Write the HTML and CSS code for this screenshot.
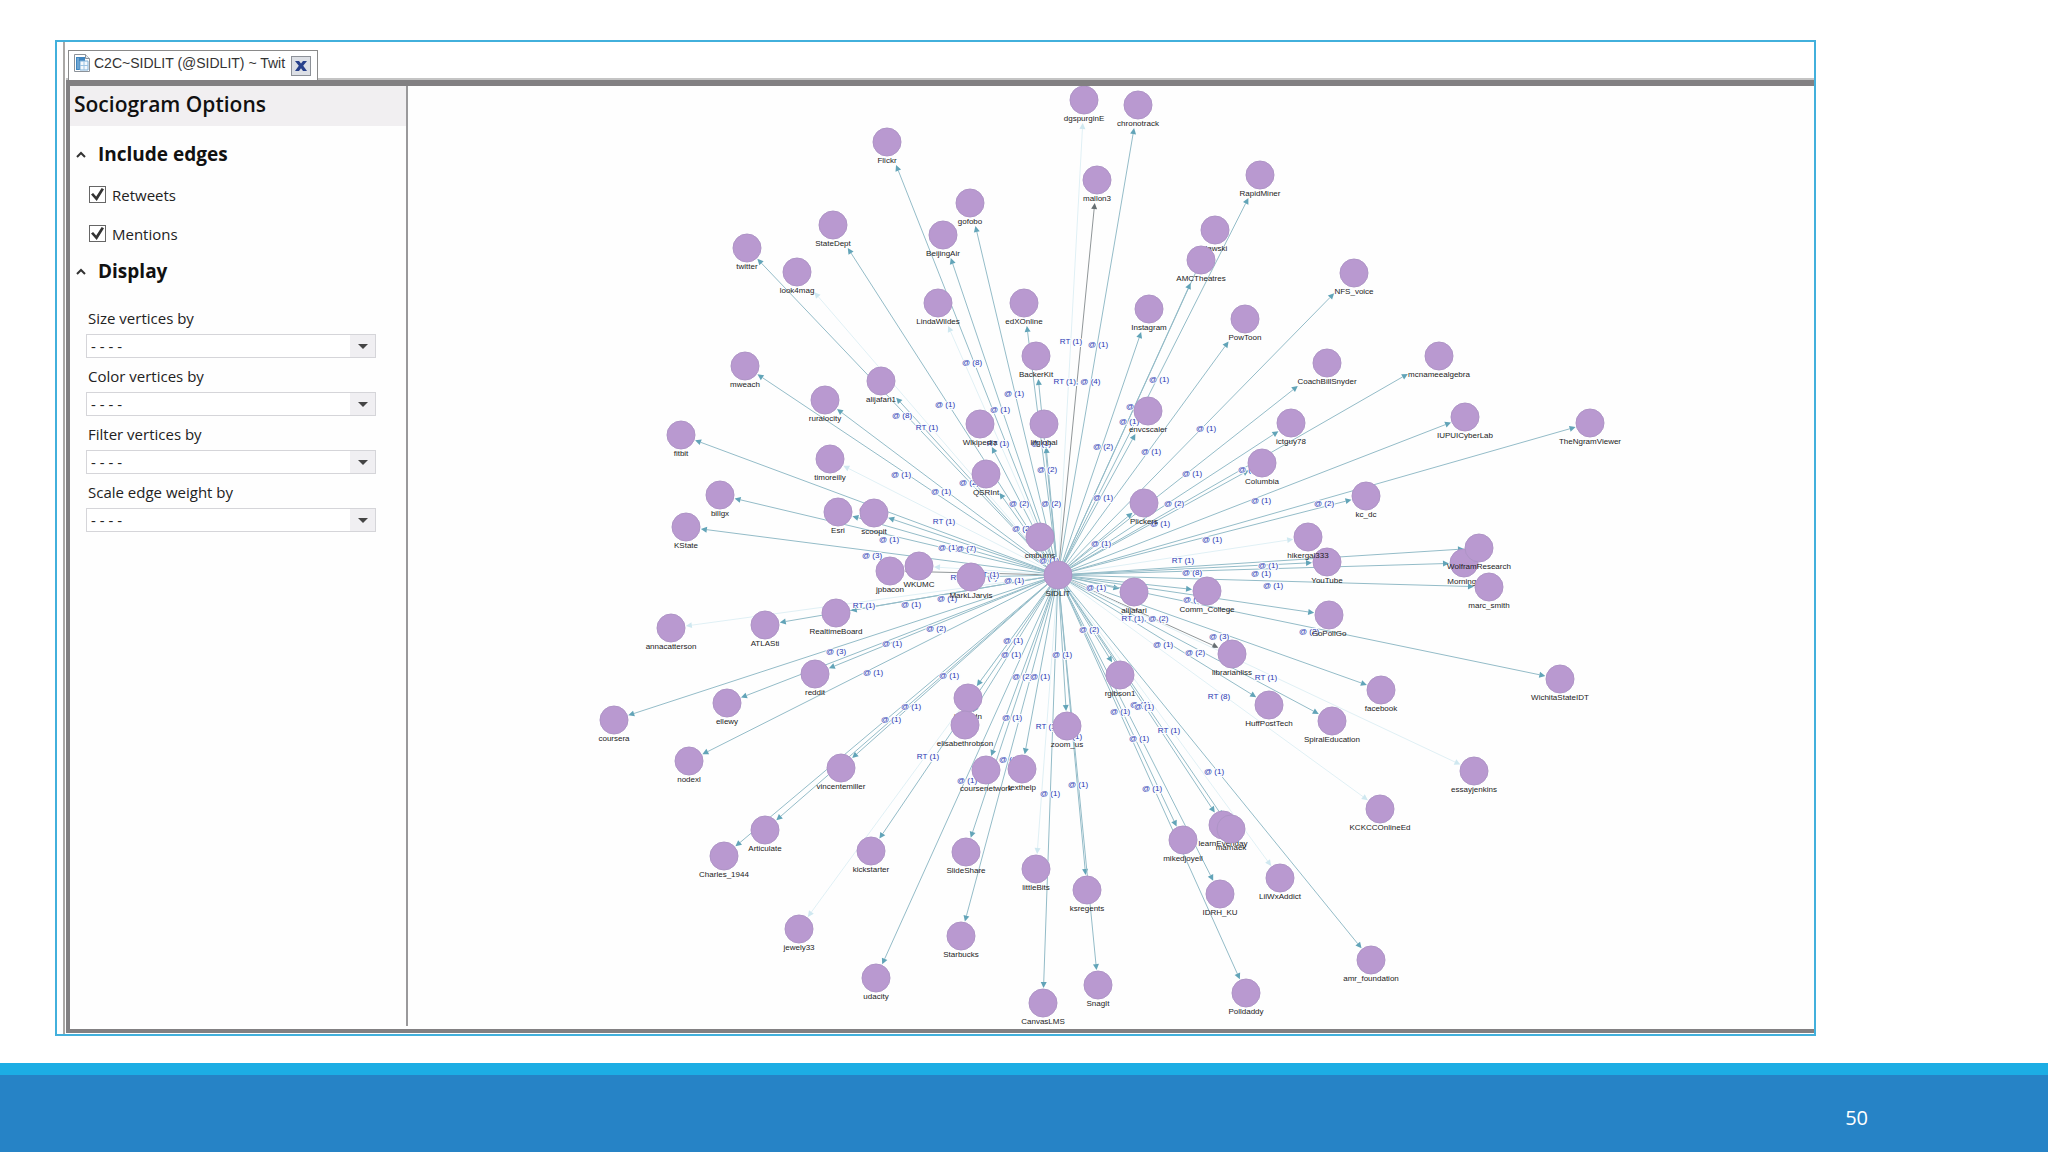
FILE: index.html
```html
<!DOCTYPE html>
<html lang="en">

<head>
    <meta charset="UTF-8">
    <title>C2C~SIDLIT (@SIDLIT) ~ Twitter Sociogram</title>
    <link rel="stylesheet" href="styles.css">
</head>

<body>
    <main class="frame">
        <div class="window">
            <div class="tab-strip">
                <div class="tab">
                    <svg class="tab-icon" width="18" height="20" viewBox="0 0 18 20">
                        <path d="M1.5 1.5h11l4 4v13h-15z" fill="#fff" stroke="#8c9299" />
                        <path d="M12.5 1.5v4h4" fill="#e3e8ee" stroke="#8c9299" />
                        <path d="M3 4h9v4H7v9H3z" fill="#3f86c0" />
                        <path d="M7 8h8v9H7z" fill="#f4f9fd" stroke="#7fb0d8" />
                        <path d="M11 8v9M7 12.5h8M5 5v11" stroke="#9cc4e4" />
                    </svg>
                    <span class="tab-title">C2C~SIDLIT (@SIDLIT) ~ Twit</span>
                    <button class="tab-close" aria-label="Close tab">
                        <svg width="12" height="10" viewBox="0 0 12 10">
                            <path d="M0 0h4l2 2.5L8 0h4L8.2 4.8 12 10H8L6 7.2 4 10H0l3.8-5.2z" fill="#27408b" />
                        </svg>
                    </button>
                </div>
            </div>

            <div class="workspace">
                <aside class="options">
                    <h1 class="options-title">Sociogram Options</h1>

                    <h2 class="section-title">
                        <button class="section-toggle" aria-expanded="true">
                            <svg width="10" height="7" viewBox="0 0 10 7">
                                <path d="M1 6l4-4 4 4" fill="none" stroke="#333" stroke-width="2" />
                            </svg>
                            Include edges
                        </button>
                    </h2>
                    <label class="check-row"><input type="checkbox" checked> Retweets</label>
                    <label class="check-row"><input type="checkbox" checked> Mentions</label>

                    <h2 class="section-title section-display">
                        <button class="section-toggle" aria-expanded="true">
                            <svg width="10" height="7" viewBox="0 0 10 7">
                                <path d="M1 6l4-4 4 4" fill="none" stroke="#333" stroke-width="2" />
                            </svg>
                            Display
                        </button>
                    </h2>
                    <div class="field">
                        <label for="size-by">Size vertices by</label>
                        <div class="select-wrap">
                            <select id="size-by"><option>- - - -</option></select>
                        </div>
                    </div>
                    <div class="field">
                        <label for="color-by">Color vertices by</label>
                        <div class="select-wrap">
                            <select id="color-by"><option>- - - -</option></select>
                        </div>
                    </div>
                    <div class="field">
                        <label for="filter-by">Filter vertices by</label>
                        <div class="select-wrap">
                            <select id="filter-by"><option>- - - -</option></select>
                        </div>
                    </div>
                    <div class="field">
                        <label for="scale-by">Scale edge weight by</label>
                        <div class="select-wrap">
                            <select id="scale-by"><option>- - - -</option></select>
                        </div>
                    </div>
                </aside>

                <svg class="graph" role="img" aria-label="Sociogram of SIDLIT">
                    <g id="scene" transform="translate(-409 -86)">
                        <g id="edges"></g>
                        <g id="edge-labels"></g>
                        <g id="nodes"></g>
                    </g>
                </svg>
            </div>
        </div>
    </main>

    <footer class="slide-footer">
        <span class="page-number">50</span>
    </footer>

    <script src="graph.js"></script>
</body>

</html>
```

FILE: styles.css
```css
* {
    box-sizing: border-box;
}

body {
    margin: 0;
    min-height: 100vh;
    display: flex;
    flex-direction: column;
    background: #fff;
    color: #222;
    font-family: "Open Sans", "Noto Sans", sans-serif;
    font-size: 15px;
}

button,
select {
    font: inherit;
    color: inherit;
}

.frame {
    flex: 1;
    display: flex;
    margin: 40px 232px 27px 55px;
    padding-left: 6px;
    border: 2px solid #42b0dc;
}

.window {
    flex: 1;
    display: flex;
    flex-direction: column;
    padding: 0 0 1px 1px;
    border-left: 2px solid #aaa8a6;
}

/* Tabs */
.tab-strip {
    display: flex;
    padding: 8px 0 0 2px;
    box-shadow: inset 0 -2px #c4c4c4;
}

.tab {
    display: flex;
    align-items: center;
    width: 250px;
    height: 30px;
    padding: 0 6px 0 4px;
    border: 1px solid #8a8a8a;
    border-bottom: none;
    background: #fff;
}

.tab-title {
    flex: 1;
    margin-left: 3px;
    padding-bottom: 6px;
    font: 14px "Liberation Sans", Arial, sans-serif;
    color: #333;
    white-space: nowrap;
}

.tab-icon {
    margin-bottom: 6px;
}

.tab-close {
    display: flex;
    align-items: center;
    justify-content: center;
    width: 20px;
    height: 20px;
    padding: 0;
    border: 1px solid #8d9198;
    background: #dcdfe5;
}

/* Work area */
.workspace {
    flex: 1;
    display: flex;
    border: solid #828082;
    border-width: 6px 0 4px 4px;
}

.options {
    display: flex;
    flex-direction: column;
    width: 338px;
    margin-bottom: 3px;
    border-right: 2px solid #9a999b;
    background: #fefefe;
}

.options-title {
    margin: 0 0 14px;
    padding: 0 4px 4px;
    background: #f1eff1;
    color: #111;
    font-size: 21px;
    font-weight: 600;
    line-height: 36px;
}

.section-title {
    margin: 0 0 7px;
    font-size: 19px;
    line-height: 28px;
}

.section-display {
    margin: 4px 0 21px;
}

.section-toggle {
    display: flex;
    align-items: center;
    gap: 12px;
    padding: 0 6px;
    border: none;
    background: none;
    color: #111;
}

.check-row {
    display: flex;
    align-items: center;
    gap: 6px;
    height: 39px;
    padding-left: 19px;
}

.check-row input {
    appearance: none;
    display: grid;
    place-items: center;
    width: 17px;
    height: 17px;
    margin: 0;
    border: 1px solid #666;
    background: #fff;
}

.check-row input:checked::before {
    content: "";
    width: 13px;
    height: 13px;
    background: #333;
    clip-path: polygon(0 50%, 16% 38%, 40% 65%, 82% 0, 100% 10%, 44% 100%);
}

.field {
    display: flex;
    flex-direction: column;
    gap: 4px;
    margin: 0 30px 6px 16px;
}

.field label {
    padding-left: 2px;
    line-height: 24px;
}

.select-wrap {
    position: relative;
}

.select-wrap::after {
    content: "";
    position: absolute;
    top: 10px;
    right: 8px;
    border: 5px solid transparent;
    border-top-color: #444;
    border-bottom: none;
    pointer-events: none;
}

.field select {
    appearance: none;
    display: block;
    width: 100%;
    height: 24px;
    padding: 0 28px 0 4px;
    border: 1px solid #d5d5d9;
    border-radius: 0;
    background: linear-gradient(to left, #f0eff2 25px, #fff 25px);
    line-height: 22px;
}

/* Graph */
.graph {
    flex: 1;
    min-width: 0;
    background: #fefefe;
}

.graph text {
    font: 8px "Liberation Sans", Arial, sans-serif;
    text-anchor: middle;
}

.edge {
    stroke: #94bcc8;
}

.edge-tip {
    fill: #62a4b8;
}

.edge.light {
    stroke: #e0f0f5;
}

.edge-tip.light {
    fill: #cfe8f0;
}

.edge.dark {
    stroke: #909698;
}

.edge-tip.dark {
    fill: #666e72;
}

.edge-label {
    fill: #2a36b0;
    stroke: #fafdff;
    stroke-width: 2px;
    paint-order: stroke;
}

.node {
    fill: #b999d0;
    stroke: #ae94c6;
}

.node-label {
    fill: #1c1c1c;
}

/* Footer */
.slide-footer {
    display: flex;
    align-items: center;
    justify-content: flex-end;
    height: 89px;
    padding: 8px 180px 0 0;
    border-top: 12px solid #1cade4;
    background: #2683c6;
}

.page-number {
    color: #fff;
    font-size: 20px;
}
```

FILE: graph.js
```js
// name, x, y, edge label, edge kind (light = retweet only, dark = both)
const nodes = [
    ['Flickr', 888, 142, '@ (8)'],
    ['gofobo', 971, 203, '@ (1)'],
    ['StateDept', 834, 225, '@ (1)'],
    ['BeijingAir', 944, 235, '@ (1)'],
    ['twitter', 748, 248, '@ (8)'],
    ['look4mag', 798, 272, 'RT (1)', 'light'],
    ['LindaWildes', 939, 303, 'RT (1)', 'light'],
    ['mweach', 746, 366, '@ (1)'],
    ['alijafari1', 882, 381, '@ (2)'],
    ['ruralocity', 826, 400, '@ (1)'],
    ['dgspurginE', 1085, 100, 'RT (1)', 'light'],
    ['chronotrack', 1139, 105, '@ (1)'],
    ['mallon3', 1098, 180, 'RT (1), @ (4)', 'dark'],
    ['RapidMiner', 1261, 175, '@ (1)'],
    ['rlawski', 1216, 230, '@ (1)'],
    ['AMCTheatres', 1202, 260, '@ (1)'],
    ['NFS_voice', 1355, 273, '@ (1)'],
    ['Instagram', 1150, 309, '@ (2)'],
    ['PowToon', 1246, 319, '@ (1)'],
    ['CoachBillSnyder', 1328, 363, '@ (1)'],
    ['edXOnline', 1025, 303, '@ (1)'],
    ['BackerKit', 1037, 356, '@ (2)'],
    ['mcnameealgebra', 1440, 356, '@ (1)'],
    ['IUPUICyberLab', 1466, 417, '@ (1)'],
    ['TheNgramViewer', 1591, 423, '@ (2)'],
    ['ictguy78', 1292, 423, '@ (2)'],
    ['kc_dc', 1367, 496, '@ (1)'],
    ['fitbit', 682, 435, '@ (1)'],
    ['billgx', 721, 495, '@ (1)'],
    ['KState', 687, 527, '@ (3)'],
    ['timoreilly', 831, 459, 'RT (1)', 'light'],
    ['Esri', 839, 512, '@ (1)'],
    ['scoopit', 875, 513, '@ (7)'],
    ['jpbacon', 891, 571, 'RT (1), @ (8)', 'dark'],
    ['WKUMC', 920, 566, 'RT (1)', 'light'],
    ['MarkLJarvis', 972, 577, '@ (1)'],
    ['annacatterson', 672, 628, 'RT (1)', 'light'],
    ['ATLASti', 766, 625, '@ (1)'],
    ['RealtimeBoard', 837, 613, '@ (1)'],
    ['reddit', 816, 674, '@ (2)'],
    ['ellewy', 728, 703, '@ (1)'],
    ['coursera', 615, 720, '@ (3)'],
    ['Wikipedia', 981, 424, '@ (2)'],
    ['lifglobal', 1045, 424, '@ (2)'],
    ['QSRInt', 987, 474, '@ (2)'],
    ['cmburns', 1041, 537, '@ (1)'],
    ['envcscaler', 1149, 411, '@ (1)'],
    ['Plickers', 1145, 503, '@ (1)'],
    ['Columbia', 1263, 463, '@ (1)'],
    ['YouTube', 1328, 562, '@ (8)'],
    ['hikergal333', 1309, 537, 'RT (1)', 'light'],
    ['alijafari', 1135, 592, '@ (1)'],
    ['Comm_College', 1208, 591, '@ (1)'],
    ['GoPollGo', 1330, 615, '@ (1)'],
    ['librarianliss', 1233, 654, 'RT (1), @ (2)', 'dark'],
    ['HuffPostTech', 1270, 705, '@ (1)'],
    ['SpiralEducation', 1333, 721, '@ (2)'],
    ['facebook', 1382, 690, '@ (3)'],
    ['Morning_', 1465, 563, '@ (1)'],
    ['WolframResearch', 1480, 548, '@ (1)'],
    ['marc_smith', 1490, 587, '@ (1)'],
    ['WichitaStateIDT', 1561, 679, '@ (2)'],
    ['essayjenkins', 1475, 771, 'RT (1)', 'light'],
    ['KCKCCOnlineEd', 1381, 809, 'RT (8)', 'light'],
    ['rgibson1', 1121, 675, '@ (2)'],
    ['learnEveriday', 1224, 825, '@ (1)'],
    ['mamaek', 1232, 829, '@ (1)'],
    ['mikedjoyell', 1184, 840, '@ (1)'],
    ['IDRH_KU', 1221, 894, '@ (1)'],
    ['LilWxAddict', 1281, 878, 'RT (1)', 'light'],
    ['Polldaddy', 1247, 993, '@ (1)'],
    ['amr_foundation', 1372, 960, '@ (1)'],
    ['nodexl', 690, 761, '@ (1)'],
    ['vincentemiller', 842, 768, '@ (1)'],
    ['Articulate', 766, 830, '@ (1)'],
    ['Charles_1944', 725, 856, '@ (1)'],
    ['kickstarter', 872, 851, '@ (1)'],
    ['jewely33', 800, 929, 'RT (1)', 'light'],
    ['udacity', 877, 978, '@ (1)'],
    ['SlideShare', 967, 852, '@ (1)'],
    ['Starbucks', 962, 936, '@ (1)'],
    ['jasondn', 969, 698, '@ (1)'],
    ['elisabethrobson', 966, 725, '@ (1)'],
    ['coursenetwork', 987, 770, '@ (2)'],
    ['texthelp', 1023, 769, '@ (1)'],
    ['littleBits', 1037, 869, 'RT (1)', 'light'],
    ['ksregents', 1088, 890, '@ (1)'],
    ['zoom_us', 1068, 726, '@ (1)'],
    ['CanvasLMS', 1044, 1003, '@ (1)'],
    ['SnagIt', 1099, 985, '@ (1)'],
    ['SIDLIT', 1059, 575]
];

const RADIUS = 14;
const hub = nodes[nodes.length - 1];

function draw(layer, tag, attrs, text) {
    const el = document.createElementNS('http://www.w3.org/2000/svg', tag);
    for (const name in attrs) {
        el.setAttribute(name, attrs[name]);
    }
    if (text) {
        el.textContent = text;
    }
    document.getElementById(layer).appendChild(el);
    return el;
}

// Distance from a node's centre to where the edge leaves its circle and label
function clearance(ux, uy, halfWidth) {
    if (uy <= 0) {
        return RADIUS + 1;
    }
    const out = Math.min(23 / uy, halfWidth / Math.abs(ux));
    return out * uy > RADIUS ? Math.max(out, RADIUS + 1) : RADIUS + 1;
}

nodes.forEach(([name, x, y, label, kind = 'plain']) => {
    draw('nodes', 'circle', { class: 'node', cx: x, cy: y, r: RADIUS });
    const text = draw('nodes', 'text', { class: 'node-label', x: x, y: y + 21 }, name);
    if (!label) {
        return;
    }

    const dx = hub[1] - x;
    const dy = hub[2] - y;
    const length = Math.hypot(dx, dy);
    const ux = dx / length;
    const uy = dy / length;
    const gap = clearance(ux, uy, text.getBBox().width / 2);
    const tipX = x + ux * gap;
    const tipY = y + uy * gap;
    const baseX = tipX + ux * 6;
    const baseY = tipY + uy * 6;

    draw('edges', 'line', { class: 'edge ' + kind, x1: hub[1], y1: hub[2], x2: baseX, y2: baseY });
    draw('edges', 'polygon', {
        class: 'edge-tip ' + kind,
        points: `${tipX},${tipY} ${baseX - uy * 3},${baseY + ux * 3} ${baseX + uy * 3},${baseY - ux * 3}`
    });
    draw('edge-labels', 'text', {
        class: 'edge-label',
        x: Math.floor((x + hub[1]) / 2),
        y: Math.floor((y + hub[2]) / 2) + 7
    }, label);
});
```
